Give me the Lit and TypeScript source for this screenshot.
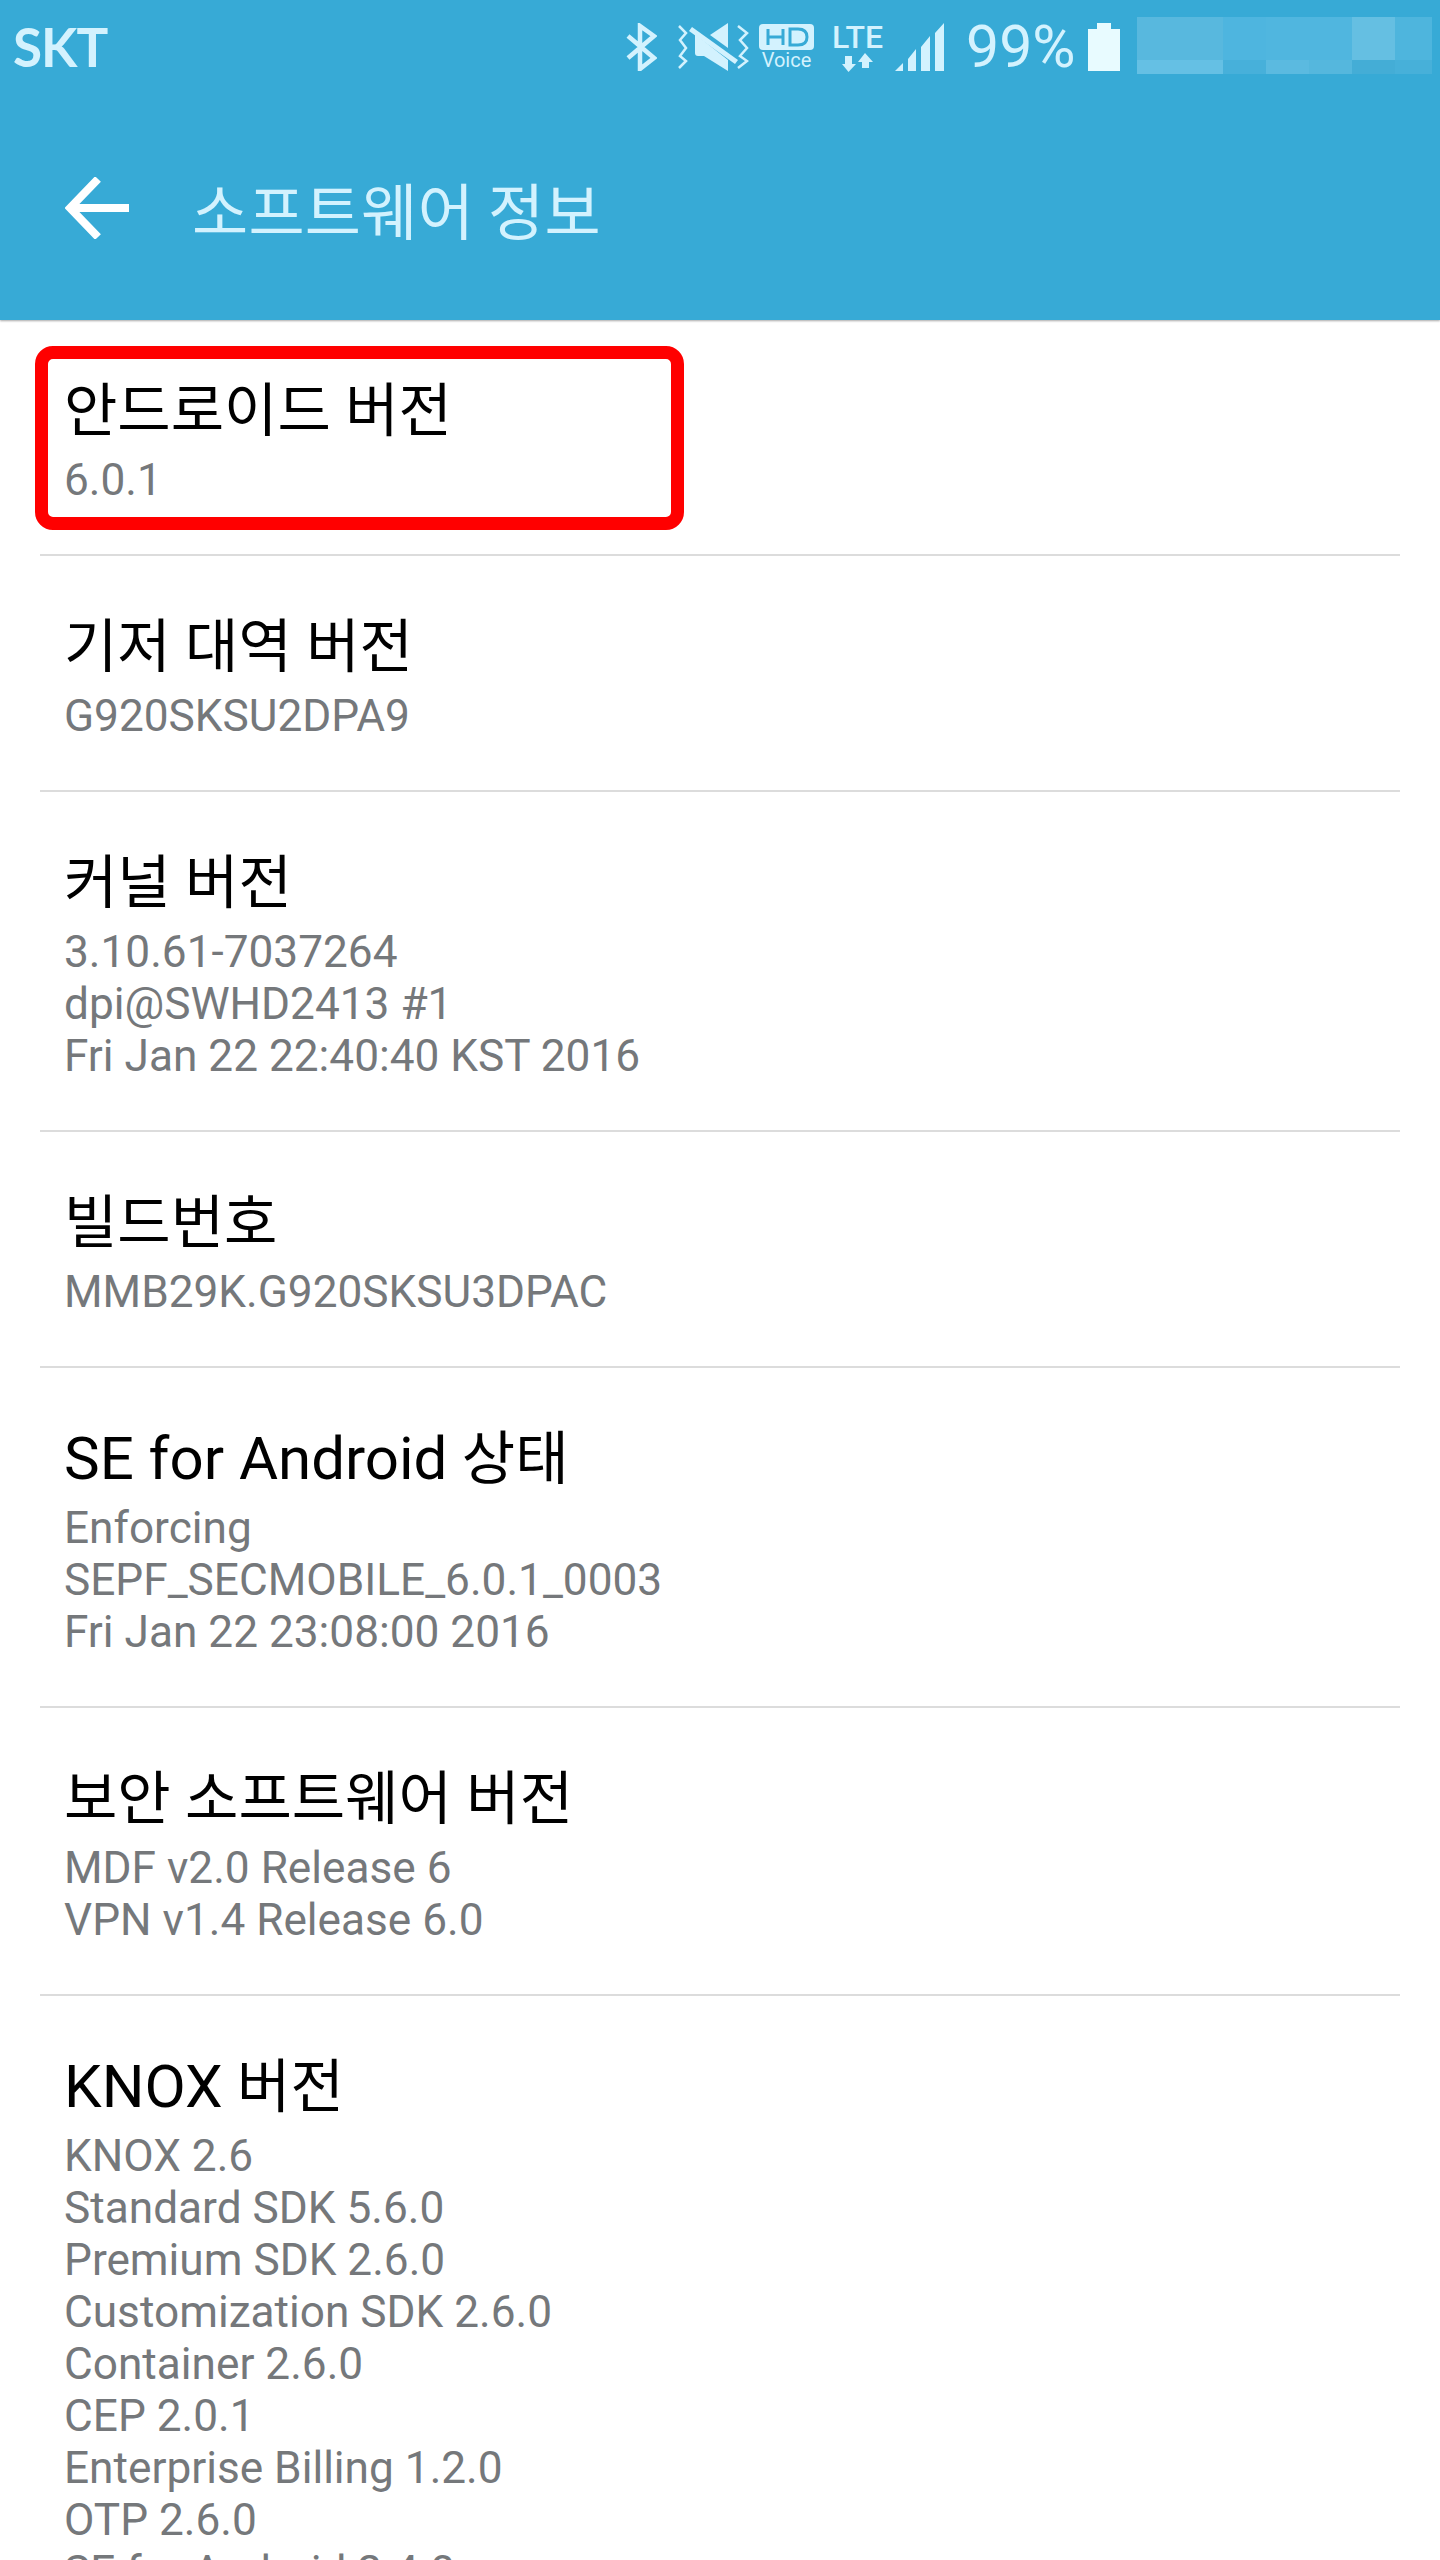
import { LitElement, html, css } from 'lit';
import { customElement } from 'lit/decorators.js';

const rows: { latin?: string; title: string; lines: string[] }[] = [
  { title: '안드로이드 버전', lines: ['6.0.1'] },
  { title: '기저 대역 버전', lines: ['G920SKSU2DPA9'] },
  { title: '커널 버전', lines: ['3.10.61-7037264', 'dpi@SWHD2413 #1', 'Fri Jan 22 22:40:40 KST 2016'] },
  { title: '빌드번호', lines: ['MMB29K.G920SKSU3DPAC'] },
  { latin: 'SE for Android', title: ' 상태', lines: ['Enforcing', 'SEPF_SECMOBILE_6.0.1_0003', 'Fri Jan 22 23:08:00 2016'] },
  { title: '보안 소프트웨어 버전', lines: ['MDF v2.0 Release 6', 'VPN v1.4 Release 6.0'] },
  {
    latin: 'KNOX',
    title: ' 버전',
    lines: [
      'KNOX 2.6',
      'Standard SDK 5.6.0',
      'Premium SDK 2.6.0',
      'Customization SDK 2.6.0',
      'Container 2.6.0',
      'CEP 2.0.1',
      'Enterprise Billing 1.2.0',
      'OTP 2.6.0',
      'SE for Android 2.4.0',
    ],
  },
];

// 흐린 영역의 블록 색 (모자이크)
const mosaic = [
  '#58b8de', '#58b8de', '#4eb5df', '#50b6df', '#50b6df', '#65bfe2', '#4eb5dd',
  '#65c0e4', '#65c0e4', '#47b0da', '#5bbae0', '#55b7dd', '#44add6', '#47b0d9',
];

@customElement('app-root')
export class AppRoot extends LitElement {
  static styles = css`
    :host {
      display: block;
      width: 1440px;
      height: 2560px;
      overflow: hidden;
      position: relative;
      background: #fff;
      font-family: Roboto, 'Noto Sans CJK KR', sans-serif;
    }
    .appbar {
      height: 320px;
      background: #37aad6;
      box-shadow: 0 1px 2px rgba(0, 0, 0, 0.35);
      color: #d3f2fe;
      display: flex;
      flex-direction: column;
    }
    .status {
      height: 94px;
      box-sizing: border-box;
      display: flex;
      align-items: flex-start;
      padding: 23px 8px 0 13px;
    }
    .status svg {
      display: block;
      flex: none;
    }
    .carrier {
      font-family: Lato, sans-serif;
      font-size: 53px;
      font-weight: 700;
      letter-spacing: -1px;
      line-height: 48px;
      margin-right: auto;
    }
    .sound {
      margin-left: 21px;
    }
    .hd {
      margin: 1px 0 0 10px;
      width: 55px;
    }
    .voice {
      display: block;
      font-size: 20px;
      line-height: 20px;
      text-align: center;
      white-space: nowrap;
    }
    .lte {
      margin: 0 0 0 18px;
      width: 50px;
    }
    .lte-label {
      display: block;
      font-size: 32px;
      font-weight: 500;
      line-height: 28px;
      text-align: center;
      white-space: nowrap;
    }
    .lte svg {
      margin: 2px 0 0 10px;
    }
    .signal {
      margin-left: 13px;
    }
    .pct {
      width: 108px;
      margin-left: 22px;
      font-size: 59px;
      font-weight: 400;
      line-height: 48px;
      white-space: nowrap;
    }
    .battery {
      margin-left: 14px;
    }
    .mosaic {
      display: grid;
      grid-template-columns: repeat(6, 43px) 37px;
      grid-template-rows: 43px 14px;
      margin: -6px 0 0 17px;
    }
    .toolbar {
      flex: 1;
      display: flex;
      align-items: center;
      padding: 2px 0 0 65px;
    }
    .toolbar h1 {
      margin: 0 0 0 63px;
      font-family: 'Noto Sans CJK KR', sans-serif;
      font-size: 61px;
      font-weight: 400;
      letter-spacing: 0.3px;
      line-height: 1;
    }
    .list {
      padding: 0 40px;
    }
    .row {
      border-bottom: 2px solid #dcdcdc;
      padding: 56px 24px 48px;
    }
    .title {
      font-size: 58px;
      line-height: 70px;
      color: #000;
      white-space: nowrap;
    }
    .latin {
      font-size: 60px;
    }
    .sub {
      font-size: 44.2px;
      line-height: 52px;
      color: #75787b;
      margin-top: 8px;
      white-space: nowrap;
    }
    .hilite {
      position: absolute;
      left: 35px;
      top: 346px;
      width: 649px;
      height: 184px;
      box-sizing: border-box;
      border: 13px solid #ff0000;
      border-radius: 18px;
    }
  `;

  private renderIcons() {
    return html`
      <svg width="31" height="48" viewBox="0 0 31 48">
        <path d="M2 13 L28 35 L14 46 V3 L28 13 L2 35" fill="none" stroke="#d3f2fe" stroke-width="4.5" />
      </svg>
      <svg class="sound" width="71" height="48" viewBox="0 0 71 48">
        <g fill="none" stroke="#d3f2fe" stroke-width="2.5">
          <path d="M1 3 L8 10 L2 17 L8 25 L2 33 L8 38 L1 45" />
          <path d="M60 3 L69 10 L62 17 L69 25 L62 33 L69 38 L60 45" />
        </g>
        <path d="M50 0 V25 L32 12 Z" fill="#d3f2fe" />
        <path d="M17 11 L50 37 V48 L26 33 H20 Q17 33 17 30 Z" fill="#d3f2fe" />
        <path d="M11 8 L14 4 L60 37 L57 41 Z" fill="#d3f2fe" />
      </svg>
      <div class="hd">
        <svg width="55" height="26" viewBox="0 0 55 26">
          <rect width="55" height="26" rx="4" fill="#d3f2fe" />
          <path
            d="M9 5 V21 M9 13 H24 M24 5 V21 M31 5 V21 H39 Q48 21 48 13 Q48 5 39 5 Z"
            fill="none"
            stroke="#37aad6"
            stroke-width="3"
          />
        </svg>
        <span class="voice">Voice</span>
      </div>
      <div class="lte">
        <span class="lte-label">LTE</span>
        <svg width="31" height="19" viewBox="0 0 31 19">
          <path d="M3 3 H10 V11 H14 L6.5 19 L0 11 H3 Z M23 0 L31 9 H27 V15 H20 V9 H16 Z" fill="#d3f2fe" />
        </svg>
      </div>
      <svg class="signal" width="49" height="48" viewBox="0 0 49 48">
        <path
          d="M0 48 L8 40 V48 Z M13 36 L21 26 V48 H13 Z M26 24 L35 13 V48 H26 Z M40 10 L49 0 V48 H40 Z"
          fill="#d3f2fe"
        />
      </svg>
      <span class="pct">99%</span>
      <svg class="battery" width="32" height="48" viewBox="0 0 32 48">
        <path d="M9 0 H23 V6 H32 V48 H0 V6 H9 Z" fill="#e8fbff" />
      </svg>
    `;
  }

  render() {
    return html`
      <div class="appbar">
        <div class="status">
          <span class="carrier">SKT</span>
          ${this.renderIcons()}
          <div class="mosaic">
            ${mosaic.map((c) => html`<div style="background: ${c}"></div>`)}
          </div>
        </div>
        <div class="toolbar">
          <svg width="64" height="62" viewBox="0 0 64 62">
            <path d="M64 31 H7 M33 2 L5 31 L33 60" fill="none" stroke="#fff" stroke-width="8" />
          </svg>
          <h1>소프트웨어 정보</h1>
        </div>
      </div>
      <div class="list">
        ${rows.map(
          (r) => html`
            <div class="row">
              <div class="title">${r.latin ? html`<span class="latin">${r.latin}</span>` : ''}${r.title}</div>
              <div class="sub">${r.lines.map((l) => html`<div>${l}</div>`)}</div>
            </div>
          `
        )}
      </div>
      <div class="hilite"></div>
    `;
  }
}
